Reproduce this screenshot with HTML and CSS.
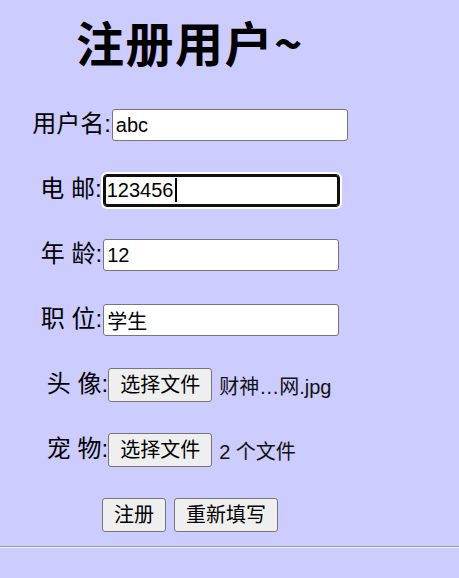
FILE: index.html
```html
<!DOCTYPE html>
<html lang="zh-CN">
<head>
<meta charset="utf-8">
<title>注册用户</title>
<link rel="stylesheet" href="styles.css">
</head>
<body>
<form class="form">
  <h1 class="title">注册用户~</h1>
  <div class="row">
    <label class="label">用户名:</label><input class="text" type="text" value="abc">
  </div>
  <div class="row">
    <label class="label">电 邮:</label><span class="field-wrap"><input class="text focused" type="text" value="123456"><span class="caret"></span></span>
  </div>
  <div class="row">
    <label class="label">年 龄:</label><input class="text" type="text" value="12">
  </div>
  <div class="row">
    <label class="label">职 位:</label><input class="text" type="text" value="学生">
  </div>
  <div class="row">
    <label class="label">头 像:</label><span class="file"><button type="button" class="btn">选择文件</button><span class="file-name">财神…网.jpg</span></span>
  </div>
  <div class="row">
    <label class="label">宠 物:</label><span class="file"><button type="button" class="btn">选择文件</button><span class="file-name">2 个文件</span></span>
  </div>
  <div class="row actions">
    <button type="submit" class="btn">注册</button><button type="reset" class="btn">重新填写</button>
  </div>
</form>
<hr class="rule">
</body>
</html>
```
FILE: styles.css
```css
html, body {
  margin: 0;
  padding: 0;
}
body {
  background: #ccccff;
  color: #000;
  font-family: "Liberation Sans", "Noto Sans CJK SC", sans-serif;
  font-size: 24px;
}
.form {
  width: 364px;
  margin: 0 0 0 8px;
  padding-top: 17px;
  display: flex;
  flex-direction: column;
  align-items: center;
}
.title {
  margin: 0 0 43px 0;
  font-size: 48px;
  line-height: 48px;
  font-weight: bold;
  letter-spacing: 1.5px;
  font-family: "Noto Sans CJK SC", sans-serif;
}
.row {
  height: 34px;
  display: flex;
  align-items: center;
  justify-content: center;
  margin-bottom: 31px;
}
.label {
  font-family: "Liberation Sans", "Noto Sans CJK SC", sans-serif;
  font-size: 24px;
  line-height: 28px;
  margin-bottom: 3px;
  white-space: pre;
}
.text {
  box-sizing: border-box;
  width: 236px;
  height: 32px;
  margin: 0 0 0 1px;
  padding: 1px 3px;
  background: #fff;
  border: 1px solid #767676;
  border-radius: 3px;
  font-family: "Liberation Sans", "Noto Sans CJK SC", sans-serif;
  font-size: 20px;
  color: #000;
}
.field-wrap {
  position: relative;
  display: inline-flex;
}
.text.focused {
  height: 33px;
  width: 237px;
  border-color: #101010;
  outline: none;
  box-shadow: inset 0 0 0 2px #101010, 0 0 0 2px #fff;
  border-radius: 4px;
}
.caret {
  position: absolute;
  left: 73px;
  top: 4px;
  width: 2px;
  height: 24px;
  background: #000;
}
.file {
  width: 225px;
  display: inline-flex;
  align-items: center;
}
.btn {
  box-sizing: border-box;
  height: 34px;
  padding: 0 11px;
  margin: 0;
  background: #efefef;
  border: 1px solid #767676;
  border-radius: 3px;
  font-family: "Liberation Sans", "Noto Sans CJK SC", sans-serif;
  font-size: 20px;
  line-height: 30px;
  color: #000;
}
.file-name {
  margin-left: 7px;
  font-size: 20px;
  color: #111;
  white-space: nowrap;
}
.actions {
  gap: 8px;
  margin-bottom: 14px;
}
.rule {
  margin: 0;
  height: 0;
  border: 0;
  border-top: 1px solid #9a9a9a;
  border-bottom: 1px solid #eeeeee;
}
```
